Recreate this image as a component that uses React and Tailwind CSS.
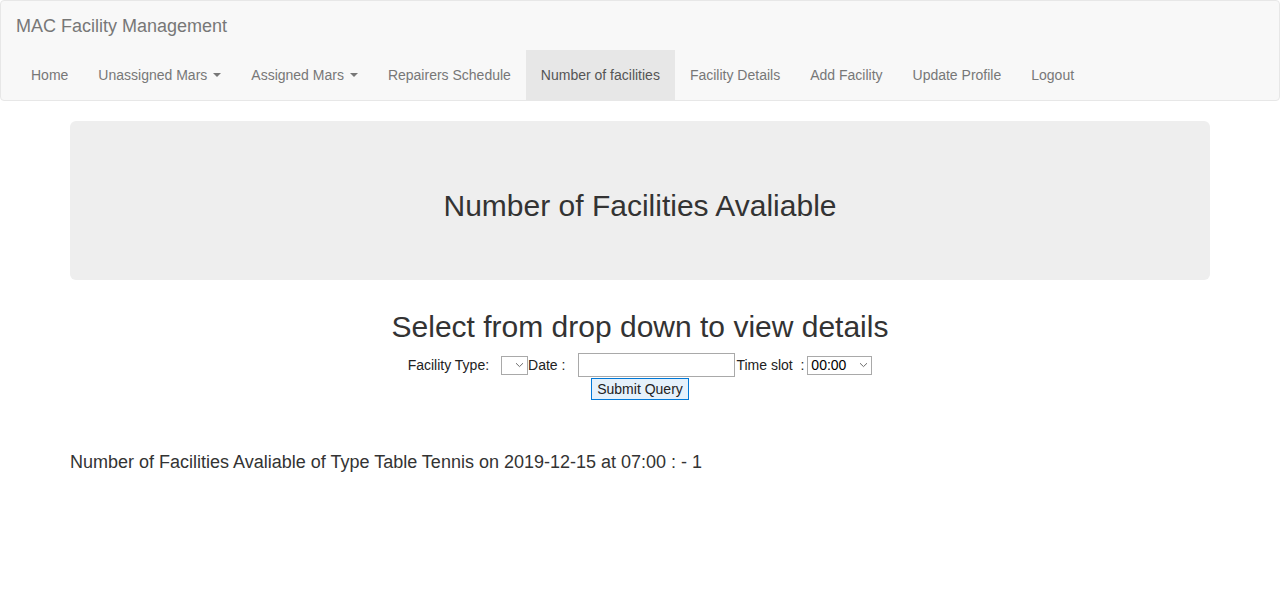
import React from 'react';

const navItems = [
  { label: 'Home' },
  { label: 'Unassigned Mars', caret: true },
  { label: 'Assigned Mars', caret: true },
  { label: 'Repairers Schedule' },
  { label: 'Number of facilities', active: true },
  { label: 'Facility Details' },
  { label: 'Add Facility' },
  { label: 'Update Profile' },
  { label: 'Logout' },
];

function Caret() {
  return (
    <span className="ml-[6px] inline-block h-0 w-0 border-x-[4px] border-t-[4px] border-x-transparent border-t-[#777] align-middle" />
  );
}

function Chevron() {
  return (
    <svg width="9" height="6" viewBox="0 0 9 6" className="shrink-0">
      <path d="M1 1.2 L4.5 4.6 L8 1.2" fill="none" stroke="#6d6d6d" strokeWidth="1" />
    </svg>
  );
}

export default function App() {
  return (
    <div className="min-h-[610px] bg-white text-[14px] leading-[20px] text-[#333]" style={{ fontFamily: '"Liberation Sans", Arial, sans-serif' }}>
      {/* navbar */}
      <div className="rounded-[4px] border border-[#e7e7e7] bg-[#f8f8f8]">
        <div className="flex h-[49px] items-center px-[15px] text-[18px] leading-[20px] text-[#777]">
          MAC Facility Management
        </div>
        <ul className="flex h-[50px] pl-[15px]">
          {navItems.map((item) => (
            <li
              key={item.label}
              className={
                'flex items-center px-[15px] ' +
                (item.active ? 'bg-[#e7e7e7] text-[#555]' : 'text-[#777]')
              }
            >
              {item.label}
              {item.caret && <Caret />}
            </li>
          ))}
        </ul>
      </div>

      <div className="mx-auto w-[1140px]">
        {/* jumbotron */}
        <div className="mt-[20px] rounded-[6px] bg-[#eee] pb-[48px] pt-[48px] text-center">
          <h2 className="mb-[10px] mt-[20px] text-[30px] leading-[33px] text-[#333]">
            Number of Facilities Avaliable
          </h2>
        </div>

        <div className="mt-[30px] text-center">
          <h2 className="text-[30px] leading-[33px]">Select from drop down to view details</h2>
          <div className="mt-[10px] flex h-[24px] items-center justify-center text-[14px] text-[#222]">
            <span>Facility Type:</span>
            <div className="ml-[12px] flex h-[19px] w-[27px] items-center justify-end border border-[#a9a9a9] bg-white pr-[3px]">
              <Chevron />
            </div>
            <span>Date :</span>
            <div className="ml-[13px] h-[24px] w-[157px] border border-[#a9a9a9] bg-white" />
            <span className="ml-[1px]">Time slot&nbsp;&nbsp;:</span>
            <div className="ml-[3px] flex h-[19px] w-[65px] items-center justify-between border border-[#a9a9a9] bg-white pl-[3px] pr-[3px] text-[14px] text-black">
              <span>00:00</span>
              <Chevron />
            </div>
          </div>
          <div className="mt-[1px] flex justify-center">
            <div className="flex h-[22px] w-[98px] items-center justify-center border border-[#0078d7] bg-[#e5f1fb] text-[14px] text-[#222]">
              Submit Query
            </div>
          </div>
        </div>

        <p className="mt-[51px] text-[18px] leading-[22px] text-[#333]">
          Number of Facilities Avaliable of Type Table Tennis on 2019-12-15 at 07:00 : - 1
        </p>
      </div>
    </div>
  );
}
